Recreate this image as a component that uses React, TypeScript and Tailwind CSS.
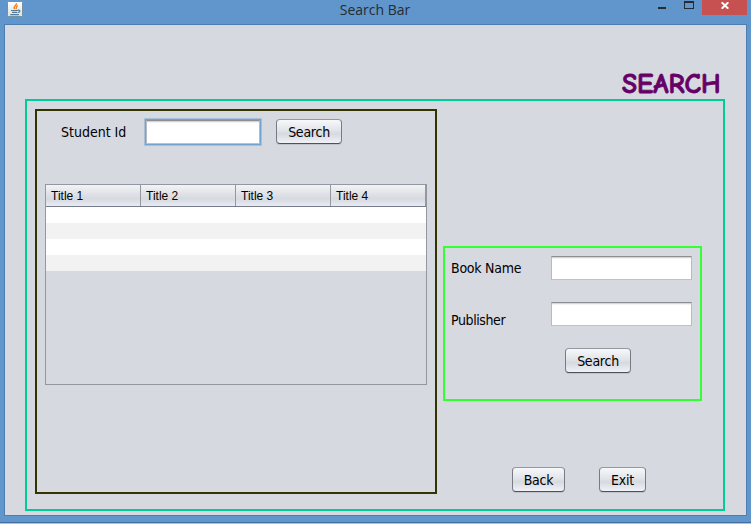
import React from "react";

const label = "font-['DejaVu_Sans_Condensed','DejaVu_Sans',sans-serif] text-[14px] leading-[18px] text-black whitespace-nowrap";

function Button({ text, className }: { text: string; className: string }) {
  return (
    <button
      className={`${label} ${className} h-[25px] shrink-0 rounded-[4px] border border-t-[#95989e] border-x-[#777b83] border-b-[#4e535b] bg-[linear-gradient(to_bottom,#f7f8fa_0%,#e2e4e9_45%,#d6d9df_60%,#f0f2f8_100%)] tracking-[-0.25px] shadow-[0_1px_0_#bfc3ca]`}
    >
      {text}
    </button>
  );
}

function Field({ name, className }: { name: string; className: string }) {
  return (
    <input
      aria-label={name}
      className={`${className} block h-6 shrink-0 border border-x-[#b8babf] border-t-[#8d8e91] border-b-[#bfc1c5] bg-white shadow-[inset_0_1px_0_#d5d5d6,inset_0_2px_0_#f3f3f3] outline-none`}
    />
  );
}

function JavaIcon() {
  return (
    <svg className="mt-px h-4 w-4" viewBox="0 0 16 16" fill="none">
      <defs>
        <linearGradient id="tile" x2="0" y2="1">
          <stop stopColor="#fff" />
          <stop offset="1" stopColor="#d9dfe3" />
        </linearGradient>
      </defs>
      <rect x=".5" y=".5" width="15" height="15" rx="1" fill="url(#tile)" stroke="#7192a5" />
      <path d="M9.4 2.2C10.4 4.2 5.4 5 7.6 8.2M10.8 4.6C8.2 5.6 10.4 6.6 8.8 8.2" stroke="#ed8427" strokeWidth="1.4" />
      <path d="M4 9.5h6.5M5 11.4h5.3M10.6 9.3c3.2-.8 2.8 2 .3 2.2M3.3 13.6h8.6" stroke="#557996" strokeWidth="1.2" />
    </svg>
  );
}

function TitleBar() {
  return (
    <header className="flex h-6 items-start justify-between pl-[7px] pr-[4px]">
      <div className="w-[180px]"><JavaIcon /></div>
      <h1 className="mr-[4px] pt-px font-['Open_Sans','Noto_Sans',sans-serif] text-[14px] leading-[18px] text-[#262b31]">Search Bar</h1>
      <div className="flex w-[180px] justify-end">
        <svg className="h-[15px] w-[46px]" viewBox="0 0 46 15" shapeRendering="crispEdges">
          <path d="M2 7h8v2H2z" fill="#262b31" />
          <path fillRule="evenodd" d="M28 1h10v8H28zM29 3v5h8V3z" fill="#262b31" />
        </svg>
        <button aria-label="Close" className="flex h-[15px] w-[45px] bg-[#c75050] pl-[19px]">
          <svg className="mt-[2px] h-[7px] w-2" viewBox="0 0 8 7">
            <path d="M.7 .3 7.3 6.7M7.3 .3 .7 6.7" stroke="#fff" strokeWidth="2" />
          </svg>
        </button>
      </div>
    </header>
  );
}

function Table() {
  return (
    <div className="mt-[38px] ml-2 h-[201px] w-[382px] border border-[#9297a1]">
      <div className="flex h-[22px] border-b border-[#757b89] bg-[linear-gradient(to_bottom,#f2f3f5_0%,#dfe1e6_45%,#d6d9df_65%,#e8ebf3_100%)]">
        {[1, 2, 3, 4].map((n) => (
          <div key={n} className="h-[21px] w-[95px] border-r border-[#9297a1] pl-[5px] font-['Liberation_Sans',Arial,sans-serif] text-[12px] leading-[23px] text-black">
            Title {n}
          </div>
        ))}
      </div>
      {[0, 1, 2, 3].map((n) => (
        <div key={n} className="h-4 odd:bg-[#f2f2f2] even:bg-white" />
      ))}
    </div>
  );
}

export default function App() {
  return (
    <div className="h-[524px] w-[751px] overflow-hidden bg-[#6096cc]">
      <div className="h-[523px] border-b border-[#416f9f]">
        <TitleBar />
        <main className="ml-1 h-[492px] w-[743px] border border-[#4c7eb1] bg-[#d6d9e0]">
          <h2 className="h-[74px] pt-[44px] pl-[617px] font-['Comic_Sans_MS','Comic_Neue',Lato,sans-serif] text-[27.5px] leading-[30px] font-bold tracking-[0px] text-[#660066] [-webkit-text-stroke:0.8px_#660066]">
            SEARCH
          </h2>
          <section className="ml-5 flex h-[412px] w-[700px] border-2 border-[#00cc99] pt-2 pl-2">
            <div className="h-[385px] w-[402px] shrink-0 border-2 border-[#333300]">
              <div className="flex pt-[7px] pl-6">
                <span className={`${label} mt-[5px] w-[83px]`}>Student Id</span>
                <div className="h-7 w-[118px] rounded-[1px] border border-[#a6c0dc] bg-[#73a4d1] p-px">
                  <Field name="Student Id" className="w-full" />
                </div>
                <Button text="Search" className="mt-px ml-[14px] w-[66px]" />
              </div>
              <Table />
            </div>
            <div className="ml-[6px] pt-[137px]">
              <div className="h-[155px] w-[259px] border-2 border-[#33ff33] pl-[6px]">
                <div className="flex pt-2">
                  <span className={`${label} mt-[3px] w-[100px] tracking-[-0.25px]`}>Book Name</span>
                  <Field name="Book Name" className="w-[141px]" />
                </div>
                <div className="mt-[22px] flex">
                  <span className={`${label} mt-[9px] w-[100px] tracking-[-0.4px]`}>Publisher</span>
                  <Field name="Publisher" className="w-[141px]" />
                </div>
                <Button text="Search" className="mt-[19px] ml-[114px] w-[66px]" />
              </div>
              <div className="mt-[66px] ml-[69px] flex gap-[34px]">
                <Button text="Back" className="w-[53px]" />
                <Button text="Exit" className="w-[47px]" />
              </div>
            </div>
          </section>
        </main>
      </div>
      <div className="h-px bg-[#a8c5e1]" />
    </div>
  );
}
